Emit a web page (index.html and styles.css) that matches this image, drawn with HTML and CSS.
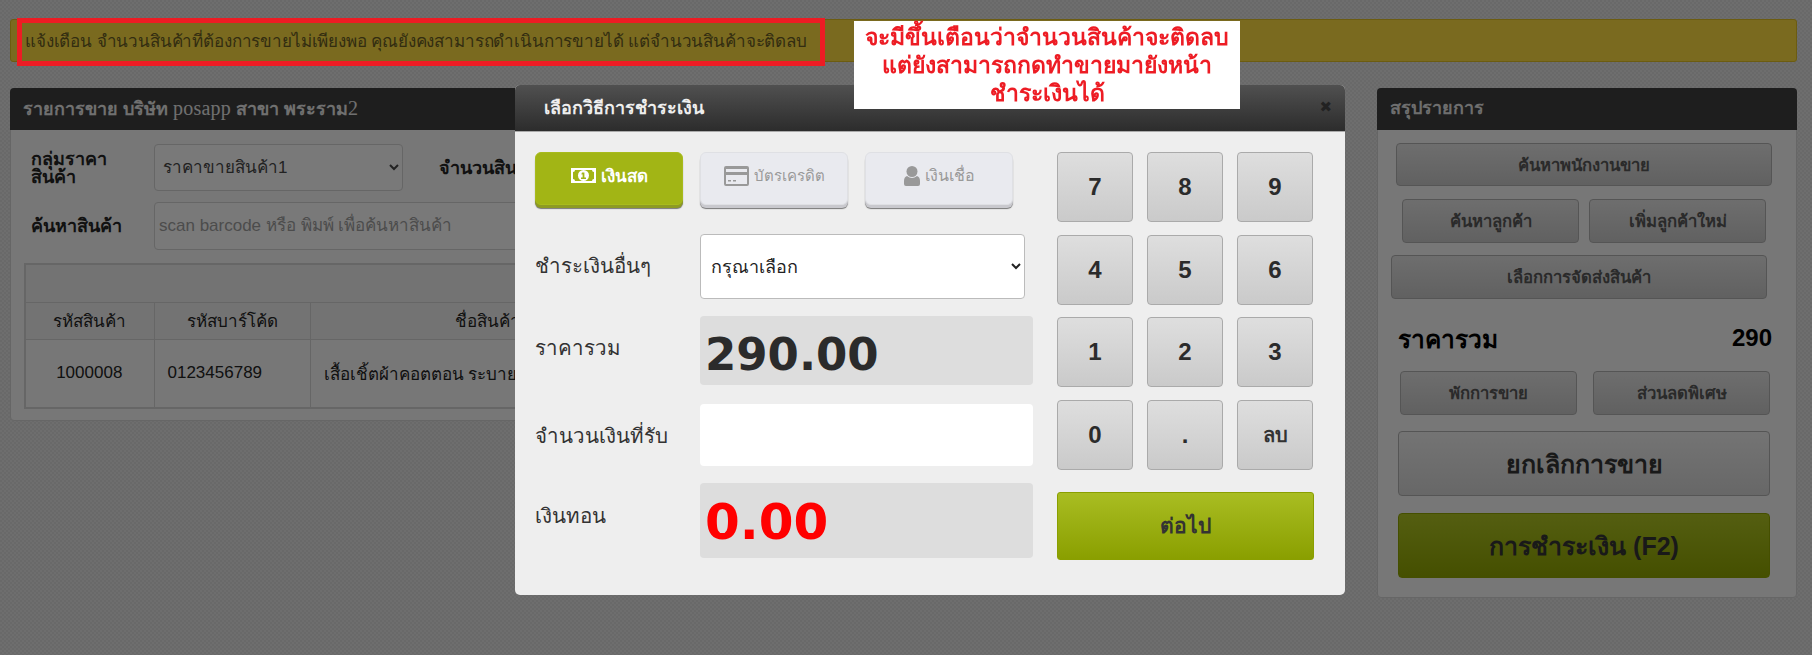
FILE: index.html
```html
<!DOCTYPE html>
<html lang="th">
<head>
<meta charset="utf-8">
<title>POS</title>
<link rel="stylesheet" href="styles.css">
</head>
<body>
<div class="page">
  <div class="alert">แจ้งเตือน จำนวนสินค้าที่ต้องการขายไม่เพียงพอ คุณยังคงสามารถดำเนินการขายได้ แต่จำนวนสินค้าจะติดลบ</div>
  <div class="layout">
    <section class="panel panel-left">
      <h2 class="panel-head head-left">รายการขาย บริษัท <span class="latin">posapp</span> สาขา พระราม<span class="latin">2</span></h2>
      <div class="left-body">
        <div class="form-row row-first">
          <label class="form-label">กลุ่มราคา<br>สินค้า</label>
          <select class="field field-select"><option>ราคาขายสินค้า1</option></select>
          <label class="form-label label-qty">จำนวนสินค้า</label>
        </div>
        <div class="form-row row-second">
          <label class="form-label">ค้นหาสินค้า</label>
          <input class="field field-search" placeholder="scan barcode หรือ พิมพ์ เพื่อค้นหาสินค้า">
        </div>
        <table class="items">
          <colgroup><col class="col-code"><col class="col-bar"><col class="col-name"><col></colgroup>
          <tr class="items-title"><th colspan="4"></th></tr>
          <tr class="items-head"><th>รหัสสินค้า</th><th>รหัสบาร์โค้ด</th><th>ชื่อสินค้า</th><th>ราคา</th></tr>
          <tr class="items-row"><td class="c">1000008</td><td>0123456789</td><td>เสื้อเชิ้ตผ้าคอตตอน ระบายอากาศ</td><td class="c">290</td></tr>
        </table>
      </div>
    </section>
    <aside class="panel panel-right">
      <h2 class="panel-head head-right">สรุปรายการ</h2>
      <div class="right-body">
        <button class="btn btn-staff">ค้นหาพนักงานขาย</button>
        <div class="btn-pair pair-customer">
          <button class="btn">ค้นหาลูกค้า</button>
          <button class="btn">เพิ่มลูกค้าใหม่</button>
        </div>
        <button class="btn btn-ship">เลือกการจัดส่งสินค้า</button>
        <div class="total"><span class="total-label">ราคารวม</span><span>290</span></div>
        <div class="btn-pair pair-hold">
          <button class="btn">พักการขาย</button>
          <button class="btn">ส่วนลดพิเศษ</button>
        </div>
        <button class="btn btn-big btn-cancel">ยกเลิกการขาย</button>
        <button class="btn btn-big btn-pay">การชำระเงิน (F2)</button>
      </div>
    </aside>
  </div>
</div>

<div class="backdrop"></div>

<div class="modal">
  <div class="modal-head">
    <h3 class="modal-title">เลือกวิธีการชำระเงิน</h3>
    <span class="modal-close">✖</span>
  </div>
  <div class="modal-body">
    <div class="pay-form">
      <div class="tabs">
        <button class="tab tab-active">
          <svg class="ico" width="25" height="17" viewBox="0 0 25 17"><path fill="#fff" d="M0 1h25v15H0z"/><path fill="#a2b515" d="M4 3h17q0 2 2 2v7q-2 0-2 2H4q0-2-2-2V5q2 0 2-2z"/><circle cx="12.5" cy="8.5" r="5.5" fill="#fff"/><path fill="#a2b515" d="M11 5.500h2.400v5H15V12h-5v-1.500h1.600V7.200l-1 .5V6.300z"/></svg>
          เงินสด
        </button>
        <button class="tab tab-card">
          <svg class="ico" width="25" height="20" viewBox="0 0 25 20"><path fill="#999" fill-rule="evenodd" d="M2 0h21a2 2 0 0 1 2 2v16a2 2 0 0 1-2 2H2a2 2 0 0 1-2-2V2a2 2 0 0 1 2-2zM2 3v3h21V3zM2 9v9h21V9zM4 14h3v1.500H4zM9 14h3v1.500H9z"/></svg>
          บัตรเครดิต
        </button>
        <button class="tab">
          <svg class="ico" width="16" height="20" viewBox="0 0 16 20"><circle cx="8" cy="5.500" r="5.500" fill="#999"/><path fill="#999" d="M3 10q5 4 10 0 3 1 3 5v3q0 2-2 2H2q-2 0-2-2v-3q0-4 3-5z"/></svg>
          เงินเชื่อ
        </button>
      </div>
      <div class="pay-row row-other">
        <label class="pay-label">ชำระเงินอื่นๆ</label>
        <select class="pay-select"><option>กรุณาเลือก</option></select>
      </div>
      <div class="pay-row row-total">
        <label class="pay-label">ราคารวม</label>
        <div class="amount amount-total">290.00</div>
      </div>
      <div class="pay-row row-received">
        <label class="pay-label">จำนวนเงินที่รับ</label>
        <input class="pay-input">
      </div>
      <div class="pay-row row-change">
        <label class="pay-label">เงินทอน</label>
        <div class="amount amount-change">0.00</div>
      </div>
    </div>
    <div class="keypad">
      <div class="keys">
        <button class="key">7</button><button class="key">8</button><button class="key">9</button>
        <button class="key">4</button><button class="key">5</button><button class="key">6</button>
        <button class="key">1</button><button class="key">2</button><button class="key">3</button>
        <button class="key">0</button><button class="key">.</button><button class="key key-del">ลบ</button>
      </div>
      <button class="next">ต่อไป</button>
    </div>
  </div>
</div>

<div class="mark-box"></div>
<div class="note">จะมีขึ้นเตือนว่าจำนวนสินค้าจะติดลบ<br>แต่ยังสามารถกดทำขายมายังหน้า<br>ชำระเงินได้</div>
</body>
</html>
```
FILE: styles.css
```css
* { box-sizing: border-box; }
html, body { height: 100%; }
body {
  margin: 0;
  height: 655px;
  overflow: hidden;
  font-family: "Liberation Sans", sans-serif;
  color: #222;
  background-color: #d6d6d6;
  background-image: conic-gradient(#dcdcdc 25%, #d2d2d2 0 50%, #dcdcdc 0 75%, #d2d2d2 0);
  background-size: 4px 4px;
}
button, select, input { font-family: inherit; }

.page { padding: 19px 15px 0 10px; }

.alert {
  height: 43px;
  padding: 0 14px;
  display: flex;
  align-items: center;
  font-size: 17px;
  letter-spacing: -.15px;
  white-space: nowrap;
  color: #665a22;
  background: #f4d43e;
  border: 1px solid #d8b820;
  border-radius: 3px;
}

.layout { display: flex; justify-content: space-between; margin-top: 26px; align-items: flex-start; }

.panel { background: #eee; border: 1px solid #ccc; border-radius: 4px; }
.panel-left { width: 1330px; height: 333px; }
.panel-right { width: 420px; height: 510px; }

.panel-head {
  margin: -1px -1px 0;
  height: 42px;
  padding: 0 13px;
  display: flex;
  align-items: center;
  font-size: 18px;
  font-weight: bold;
  color: #ddd;
  background: #3c3c3c;
  border-radius: 4px 4px 0 0;
}
.head-right { padding-bottom: 3px; }
.head-left { display: block; line-height: 40px; font-size: 18px; white-space: nowrap; color: #e0e0e0; }
.latin { font-family: "Liberation Serif", serif; font-weight: normal; font-size: 20px; letter-spacing: .2px; }

.left-body { padding: 14px 13px 0; }
.form-row { display: flex; align-items: center; }
.row-first { height: 47px; }
.row-second { height: 48px; margin-top: 11px; }
.form-label { width: 130px; padding-left: 7px; font-size: 18px; font-weight: bold; line-height: 18px; color: #222; flex: none; }
.label-qty { width: auto; padding-left: 36px; white-space: nowrap; }
.field {
  height: 100%;
  font-size: 17px;
  color: #444;
  background: #f2f2f2;
  border: 1px solid #ccc;
  border-radius: 4px;
}
.field-select { width: 249px; padding-left: 4px; }
.field-search { width: 900px; padding-left: 4px; }
.field-search::placeholder { color: #999; }

.items { width: 1305px; margin-top: 13px; border-collapse: collapse; table-layout: fixed; font-size: 17px; border: 2px solid #ccc; }
.items th, .items td { border: 1px solid #ccc; font-weight: normal; text-align: center; color: #222; white-space: nowrap; overflow: hidden; }
.items th { background: #e6e6e6; }
.col-code { width: 129px; }
.col-bar { width: 156px; }
.col-name { width: 354px; }
.items-title { height: 38px; }
.items-head { height: 37px; }
.items-row { height: 69px; }
.items .items-row td { text-align: left; padding-left: 13px; }
.items .items-row td.c { text-align: center; padding-left: 0; }

.right-body { padding-top: 13px; font-size: 15px; }
.btn {
  display: block;
  font-size: 16.7px;
  font-weight: bold;
  color: #555;
  background: linear-gradient(#dcdcdc, #c2c2c2);
  border: 1px solid #aaa;
  border-radius: 4px;
}
.btn-staff { width: 376px; height: 43px; margin-left: 18px; }
.btn-pair { display: flex; }
.btn-pair .btn { width: 177px; height: 44px; }
.pair-customer { margin: 13px 0 0 24px; gap: 10px; }
.btn-ship { width: 376px; height: 44px; margin: 12px 0 0 13px; }
.total {
  display: flex;
  justify-content: space-between;
  margin: 23px 24px 0 20px;
  height: 32px;
  align-items: center;
  font-size: 24px;
  font-weight: bold;
  color: #000;
}
.total-label { font-size: 24.5px; padding-top: 2px; }
.pair-hold { margin: 17px 0 0 22px; gap: 16px; }
.btn-big { width: 372px; height: 65px; margin-left: 20px; font-size: 25px; }
.btn-cancel { margin-top: 16px; color: #333; background: linear-gradient(#e8e8e8, #cfcfcf); }
.btn-pay { margin-top: 17px; color: #333; background: linear-gradient(#a9bd22, #8a9f00); border-color: #8a9f00; }

.backdrop { position: fixed; inset: 0; background: rgba(0, 0, 0, .5); }

.modal {
  position: absolute;
  left: 515px;
  top: 85px;
  width: 830px;
  height: 510px;
  background: #eee;
  border-radius: 5px;
  overflow: hidden;
}
.modal-head {
  height: 47px;
  padding: 0 13px 2px 29px;
  display: flex;
  align-items: center;
  justify-content: space-between;
  background: linear-gradient(#505050, #2c2c2c);
  border-bottom: 1px solid #aaa;
}
.modal-title { margin: 0; font-size: 18px; font-weight: bold; color: #eee; }
.modal-close { font: 15px "DejaVu Sans", sans-serif; color: #222; }

.modal-body { display: flex; padding: 20px 0 0 20px; }
.pay-form { width: 498px; }
.tabs { display: flex; gap: 17px; }
.tab {
  width: 148px;
  height: 53px;
  margin-bottom: 4px;
  padding: 0 0 6px;
  display: flex;
  align-items: center;
  justify-content: center;
  gap: 5px;
  font-size: 16px;
  color: #999;
  background: #e9eaef;
  border: 1px solid #dfe0e4;
  border-radius: 6px;
  box-shadow: 0 3px 0 #c9c9ce, 0 4px 1px #777;
}
.tab-card { font-size: 15px; }
.tab-active { font-size: 17px; color: #fff; font-weight: bold; background: #a2b515; border-color: #a8bb1c; box-shadow: 0 3px 0 #8d9b22, 0 4px 1px #777; }

.pay-row { display: flex; }
.pay-label { width: 165px; flex: none; display: flex; align-items: center; font-size: 20.5px; color: #333; }
.row-other { height: 65px; margin-top: 25px; }
.row-total { height: 69px; margin-top: 17px; }
.row-received { height: 62px; margin-top: 19px; }
.row-change { height: 75px; margin-top: 17px; }
.row-other .pay-label { padding-bottom: 2px; }
.row-total .pay-label { padding-bottom: 6px; }
.row-change .pay-label { padding-bottom: 11px; }
.pay-select {
  width: 325px;
  padding-left: 6px;
  font-size: 18px;
  color: #222;
  background: #fff;
  border: 1px solid #bbb;
  border-radius: 4px;
}
.pay-input { width: 333px; background: #fff; border: 0; border-radius: 4px; }
.amount {
  width: 333px;
  display: flex;
  align-items: center;
  padding-left: 5px;
  font-family: "DejaVu Sans", sans-serif;
  font-weight: bold;
  background: #ddd;
  border-radius: 4px;
}
.amount-total { font-size: 45px; padding-top: 8px; color: #2b2b2b; }
.amount-change { font-size: 50px; padding-top: 3px; color: #f00; }

.keypad { margin-left: 24px; width: 257px; }
.keys { display: grid; grid-template-columns: repeat(3, 76px); grid-auto-rows: 70px; column-gap: 14px; row-gap: 12.67px; }
.key {
  padding: 0;
  font: bold 24px "Liberation Sans", sans-serif;
  color: #2b2b2b;
  background: linear-gradient(#dedede, #cacaca);
  border: 1px solid #aaa;
  border-radius: 4px;
}
.key-del { font-size: 20px; color: #333; }
.next {
  display: block;
  width: 257px;
  height: 68px;
  margin-top: 22px;
  font-size: 21px;
  font-weight: bold;
  color: #333;
  background: linear-gradient(#a9bd22, #8a9f00);
  border: 1px solid #8a9f00;
  border-radius: 3px;
}

.mark-box { position: absolute; left: 17px; top: 18px; width: 808px; height: 48px; border: 5px solid #ed1c24; }
.note {
  position: absolute;
  left: 854px;
  top: 21px;
  width: 386px;
  height: 88px;
  padding-top: 2px;
  font-size: 23px;
  font-weight: bold;
  line-height: 28px;
  text-align: center;
  white-space: nowrap;
  color: #ed1c24;
  background: #fff;
}
```
